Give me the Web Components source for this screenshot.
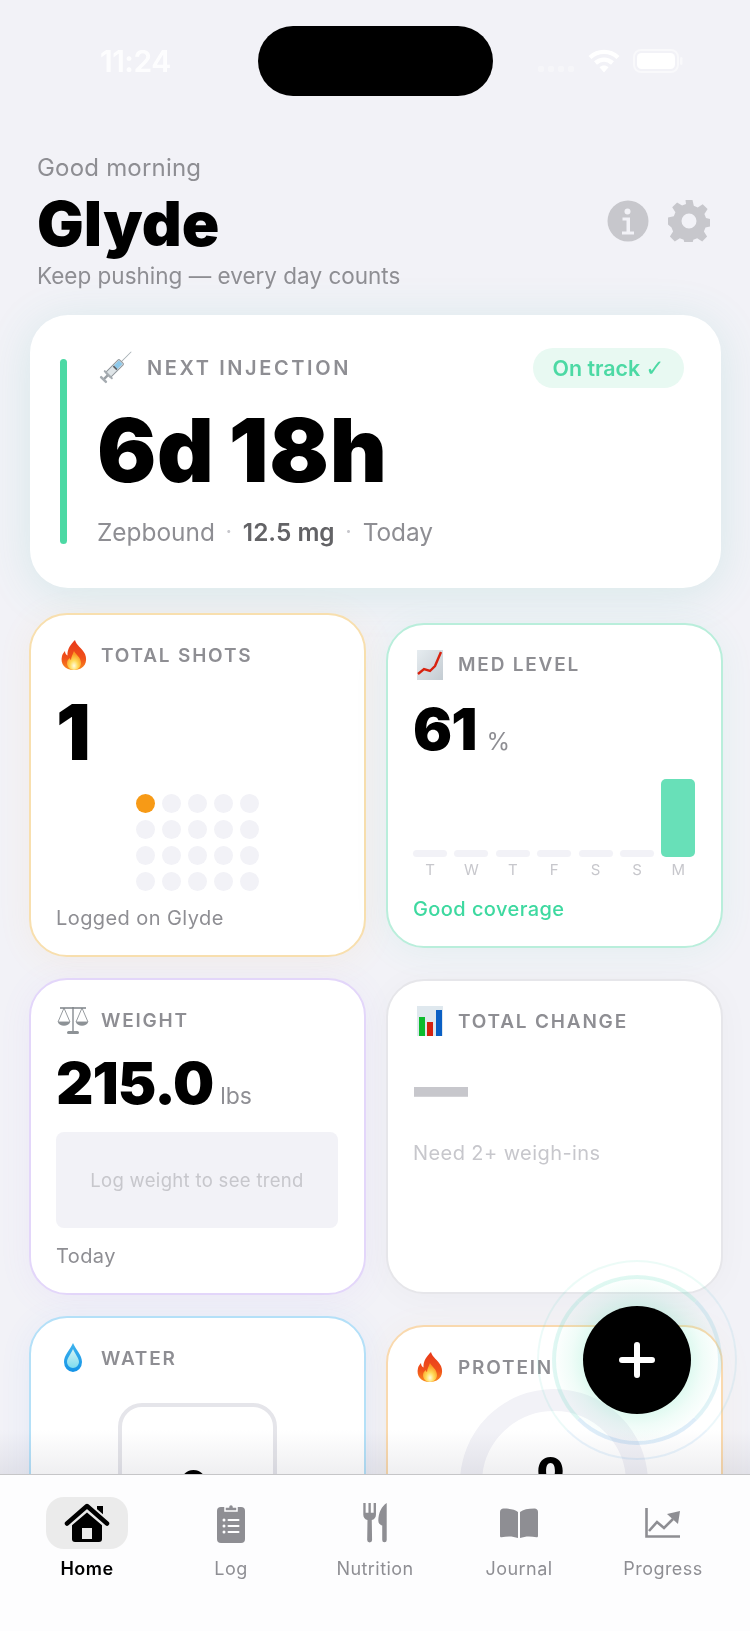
<!DOCTYPE html>
<html>
<head>
<meta charset="utf-8">
<style>
  html, body { margin: 0; background: #f2f2f7; font-family: Inter, "Liberation Sans", sans-serif; }
  svg { display: block; }
</style>
</head>
<body>

<svg width="0" height="0" style="position:absolute">
  <defs>
    <linearGradient id="flame" x1="0" y1="0" x2="0" y2="1">
      <stop offset="0" stop-color="#e8391a"/><stop offset=".6" stop-color="#f0501a"/><stop offset="1" stop-color="#f98a1f"/>
    </linearGradient>
    <radialGradient id="flameCore" cx=".5" cy=".78" r=".62">
      <stop offset="0" stop-color="#fffbe0"/><stop offset=".45" stop-color="#ffdc5a"/><stop offset="1" stop-color="#fb9a24"/>
    </radialGradient>
    <linearGradient id="drop" x1="0" y1="0" x2="0" y2="1">
      <stop offset="0" stop-color="#3fb4ee"/><stop offset="1" stop-color="#1493e6"/>
    </linearGradient>
    <linearGradient id="dropCore" x1="0" y1="0" x2="0" y2="1">
      <stop offset="0" stop-color="#d5f3f5"/><stop offset="1" stop-color="#7fdcee"/>
    </linearGradient>
    <linearGradient id="paper" x1="0" y1="0" x2="1" y2="1">
      <stop offset="0" stop-color="#e6ecf0"/><stop offset="1" stop-color="#c4ccd2"/>
    </linearGradient>
    <g id="fire">
      <path d="M15 0c1 5 7 8 10 14 3 7 0 16-11 16C5 30 0 24 2 16c.5-2 2-4 3-5 0 2 1 4 2.500 4.500C7 9 11 4 15 0z" fill="url(#flame)"/>
      <path d="M14 11c1 3 7 6 7 12 0 4-3 7-7 7s-7-3-7-7c0-3 2-4 3-5 0 1 .5 2 1 2 0-3 2-6 3-9z" fill="url(#flameCore)"/>
    </g>
  </defs>
</svg>

<script>
/* small helper so every component is declared the same way */
const define = (name, css, html) => {
  const template = document.createElement('template')
  template.innerHTML = `<style>${css}</style>${html}`
  customElements.define(name, class extends HTMLElement {
    constructor () {
      super()
      this.attachShadow({ mode: 'open' }).appendChild(template.content.cloneNode(true))
    }
  })
}

define('status-bar', `
  :host { display: flex; height: 122px; box-sizing: border-box; padding: 26px 0 0 100px; align-items: flex-start; color: #fff; }
  .time { font-size: 30px; font-weight: 600; line-height: 24px; margin-top: 23px; width: 158px; letter-spacing: -.5px; opacity: .92; }
  .island { width: 235px; height: 70px; background: #000; border-radius: 35px; }
  .icons { margin-left: 45px; display: flex; align-items: flex-start; padding-top: 23px; }
`, `
  <span class="time">11:24</span>
  <div class="island"></div>
  <div class="icons"><slot></slot></div>
`)

define('page-header', `
  :host { display: flex; justify-content: space-between; align-items: flex-start; padding: 30px 40px 0 37px; height: 193px; box-sizing: border-box; }
  .hi { font-size: 24px; line-height: 30px; color: #8e8e93; margin-top: 1px; letter-spacing: .2px; }
  .name { font-size: 62px; font-weight: 900; line-height: 68px; color: #000; letter-spacing: .1px; margin-top: 7px; }
  .sub { font-size: 22.5px; line-height: 28px; color: #8e8e93; margin-top: 4px; }
  .actions { display: flex; gap: 19px; margin-top: 48px; }
`, `
  <div>
    <div class="hi"><slot name="hi"></slot></div>
    <div class="name"><slot name="name"></slot></div>
    <div class="sub"><slot name="sub"></slot></div>
  </div>
  <div class="actions"><slot name="actions"></slot></div>
`)

define('hero-card', `
  :host { display: block; width: 691px; height: 273px; margin: 0 0 25px 30px; box-sizing: border-box; background: #fff; border-radius: 38px;
    box-shadow: 0 6px 46px rgba(60,180,160,.15); padding: 44px 37px 0 30px; }
  .wrap { display: flex; gap: 31px; height: 185px; }
  .rail { width: 7px; background: #4cd9a4; border-radius: 4px; }
  .main { flex: 1; min-width: 0; }
  .top { display: flex; justify-content: space-between; align-items: center; height: 32px; margin-top: -7px; }
  .big { font-size: 88px; font-weight: 900; line-height: 88px; color: #000; letter-spacing: .7px; word-spacing: -4px; margin-top: 22px; margin-left: -1px; }
  .foot { margin-top: 23px; margin-left: -1px; }
`, `
  <div class="wrap">
    <div class="rail"></div>
    <div class="main">
      <div class="top"><slot name="label"></slot><slot name="pill"></slot></div>
      <div class="big"><slot name="big"></slot></div>
      <div class="foot"><slot name="foot"></slot></div>
    </div>
  </div>
`)

define('card-label', `
  :host { display: flex; align-items: center; height: 30px; font-weight: 600; color: #8e8e93; font-size: 19px; letter-spacing: 1.8px; white-space: nowrap; }
  .ic { width: var(--ic, 45px); flex: none; display: flex; justify-content: flex-start; }
`, `<span class="ic"><slot name="icon"></slot></span><slot></slot>`)

define('stat-card', `
  :host { display: block; box-sizing: border-box; width: 337px; background: #fff; border: 2px solid var(--edge, #e6e6ea); border-radius: 38px;
    padding: 25px 26px 25px 25px; box-shadow: 0 4px 34px var(--glow, rgba(0,0,0,.03)); }
`, `<slot></slot>`)

define('big-value', `
  :host { display: block; font-size: var(--size, 58px); line-height: var(--size, 58px); font-weight: 900; color: #000; letter-spacing: -1px; white-space: nowrap; }
  .unit { font-size: var(--unit, 24px); line-height: 0; font-weight: 400; color: #8e8e93; letter-spacing: 0; margin-left: var(--unit-gap, 8px); }
`, `<slot></slot><span class="unit"><slot name="unit"></slot></span>`)

define('card-note', `
  :host { display: block; font-size: 20px; line-height: 24px; color: #8e8e93; white-space: nowrap; letter-spacing: .42px; }
`, `<slot></slot>`)

define('dot-grid', `
  :host { display: grid; grid-template-columns: repeat(5, 19px); gap: 7px; justify-content: center; }
  span { width: 19px; height: 19px; border-radius: 50%; background: #f2f2f7; }
  span.on { background: #f79a16; }
`, `<span class="on"></span>${'<span></span>'.repeat(19)}`)

define('day-bars', `
  :host { display: grid; grid-template-columns: repeat(7, 34px); column-gap: 7.4px; grid-template-rows: 78px 18px; row-gap: 4px; align-items: end; }
  i { display: block; height: 7px; background: #f2f2f7; border-radius: 4px; }
  i.full { height: 78px; background: #68e0b8; border-radius: 5px; }
  b { font-size: 15px; line-height: 18px; font-weight: 400; color: #c7c7cc; text-align: center; }
`, `
  <i></i><i></i><i></i><i></i><i></i><i></i><i class="full"></i>
  <b>T</b><b>W</b><b>T</b><b>F</b><b>S</b><b>S</b><b>M</b>
`)

define('trend-empty', `
  :host { display: flex; align-items: center; justify-content: center; height: 96px; width: 282px; background: #f2f2f7; border-radius: 8px; font-size: 18.5px; letter-spacing: .32px; color: #c7c7cc; }
`, `<slot></slot>`)

define('water-glass', `
  :host { display: flex; align-items: center; justify-content: center; box-sizing: border-box; width: 159px; height: 176px; margin: 30px auto 0; border: 4px solid #e5e5ea; border-radius: 24px; padding-bottom: 14px; }
`, `<slot></slot>`)

define('protein-ring', `
  :host { display: flex; align-items: center; justify-content: center; box-sizing: border-box; width: 188px; height: 188px; margin: 7px auto 0; border: 22px solid #f2f2f7; border-radius: 50%; padding-bottom: 24px; }
`, `<slot></slot>`)

define('add-button', `
  :host { position: absolute; left: 537px; top: 1260px; width: 200px; height: 200px; border-radius: 50%; display: flex; align-items: center; justify-content: center;
    background: radial-gradient(circle closest-side, rgba(60,220,165,.16) 54%, rgba(60,220,165,.08) 66%, rgba(60,220,165,0) 85%); }
  .r1, .r2 { position: absolute; border-radius: 50%; box-sizing: border-box; }
  .r1 { inset: 15px; border: 4px solid; border-color: rgba(100,220,190,.2) rgba(110,195,215,.2) rgba(110,175,225,.22) rgba(100,215,195,.2); }
  .r2 { inset: 0; border: 2px solid; border-color: rgba(100,220,190,.12) rgba(110,195,215,.13) rgba(110,175,225,.15) rgba(100,215,195,.12); }
  .btn { width: 108px; height: 108px; background: #000; border-radius: 50%; display: flex; align-items: center; justify-content: center; position: relative; }
`, `<span class="r2"></span><span class="r1"></span><div class="btn"><slot></slot></div>`)

define('tab-bar', `
  :host { display: grid; grid-template-columns: repeat(5, 144px); box-sizing: border-box; height: 157px; padding: 22px 15px 0; background: #fdfdfe; border-top: 1px solid #c6c6c8; position: relative; }
`, `<slot></slot>`)

define('tab-item', `
  :host { display: flex; flex-direction: column; align-items: center; color: #8e8e93; font-size: 18px; line-height: 22px; letter-spacing: .45px; }
  :host([active]) { color: #000; font-weight: 600; }
  .ic { width: 82px; height: 52px; border-radius: 18px; display: flex; align-items: center; justify-content: center; margin-bottom: 9px; }
  :host([active]) .ic { background: #ebebeb; }
`, `<span class="ic"><slot name="icon"></slot></span><slot></slot>`)

define('on-track', `
  :host { display: flex; align-items: center; justify-content: center; gap: 5px; height: 40px; width: 151px; box-sizing: border-box; border-radius: 20px; background: #e8f9f2; color: #4cd9a4; font-size: 21.4px; font-weight: 600; white-space: nowrap; }
  span { font-family: "DejaVu Sans", sans-serif; font-weight: 400; font-size: 23px; line-height: 24px; }
`, `On track <span>✓</span>`)

define('hero-meta', `
  :host { display: flex; align-items: center; font-size: 24.4px; line-height: 30px; color: #8e8e93; white-space: nowrap; }
  b { font-weight: 600; color: #636366; }
  i { font-style: normal; font-weight: 700; margin: 0 11px; color: #c7c7cc; font-size: 18px; }
`, `Zepbound<i>·</i><b>12.5 mg</b><i>·</i>Today`)

define('glyde-app', `
  :host { display: block; position: relative; width: 750px; height: 1631px; overflow: hidden; background: #f2f2f7; }
  .scroll { height: 1474px; overflow: hidden; position: relative; }
  .cards { display: grid; grid-template-columns: 337px 337px; gap: 21px 20px; align-items: center; margin-left: 29px; }
  .fade { position: absolute; left: 0; right: 0; top: 1430px; height: 44px; background: linear-gradient(#fff, #efeff1); mix-blend-mode: multiply; pointer-events: none; }
`, `
  <div class="scroll">
    <slot name="top"></slot>
    <div class="cards"><slot name="cards"></slot></div>
    <div class="fade"></div>
  </div>
  <slot name="tabs"></slot>
  <slot name="fab"></slot>
`)
</script>

<glyde-app>
  <status-bar slot="top">
    <svg width="36" height="24" viewBox="0 0 36 24"><g fill="#fff" opacity=".35"><rect x="0" y="17" width="6" height="6" rx="2"/><rect x="10" y="17" width="6" height="6" rx="2"/><rect x="20" y="17" width="6" height="6" rx="2"/><rect x="30" y="17" width="6" height="6" rx="2"/></g></svg>
    <svg width="32" height="24" viewBox="0 0 32 24" style="margin-left:14px"><path d="M2 8.500C10 1 22 1 30 8.500" fill="none" stroke="#fff" stroke-width="4.400"/><path d="M7.500 14C12.500 9.500 19.500 9.500 24.500 14" fill="none" stroke="#fff" stroke-width="4.400"/><path d="M11.500 18.200c2.600-2.400 6.400-2.400 9 0L16 23.500z" fill="#fff"/></svg>
    <svg width="50" height="24" viewBox="0 0 50 24" style="margin-left:13px"><rect x="1" y="1" width="44" height="22" rx="7" fill="none" stroke="#fff" stroke-opacity=".5" stroke-width="2"/><rect x="4" y="4" width="38" height="16" rx="4.500" fill="#fff"/><rect x="47" y="8" width="2.500" height="8" rx="1.200" fill="#fff" opacity=".5"/></svg>
  </status-bar>

  <page-header slot="top">
    <span slot="hi">Good morning</span>
    <span slot="name">Glyde</span>
    <span slot="sub">Keep pushing — every day counts</span>
    <svg slot="actions" width="42" height="42" viewBox="0 0 42 42"><circle cx="21" cy="21" r="20.500" fill="#c7c7cc"/><circle cx="20.500" cy="11.500" r="3" fill="#f2f2f7"/><path d="M15.500 17.500h7.500v14h4v3H15v-3h4.500v-11h-4z" fill="#f2f2f7"/></svg>
    <svg slot="actions" width="42" height="42" viewBox="0 0 42 42"><path fill="#c7c7cc" fill-rule="evenodd" d="M17.500 0h7l1.300 5.800 3.900 1.600 5-3.200 4.900 4.900-3.200 5 1.600 3.900 5.300 1.300v7l-5.800 1.300-1.600 3.900 3.200 5-4.900 4.900-5-3.200-3.900 1.600-1.300 5.800h-7l-1.300-5.800-3.900-1.600-5 3.200-4.900-4.900 3.200-5-1.600-3.900L0 24.500v-7l5.800-1.300 1.600-3.900-3.200-5 4.900-4.900 5 3.200 3.900-1.600zM21 13.500a7.500 7.500 0 1 0 0 15 7.500 7.500 0 0 0 0-15z"/></svg>
  </page-header>

  <hero-card slot="top">
    <card-label slot="label" style="font-size:20px;letter-spacing:2.6px;--ic:49px">
      <svg slot="icon" width="34" height="34" viewBox="0 0 34 34"><g transform="rotate(45 17 17)"><rect x="16.600" y="-6" width=".8" height="15" fill="#a4adb3"/><rect x="13.500" y="8" width="7" height="19" rx="1" fill="#dfe5e8" stroke="#90969b" stroke-width="1"/><rect x="14.500" y="9" width="5" height="7" fill="#8cc8ea"/><rect x="14.500" y="16" width="5" height="1.600" fill="#555c62"/><rect x="15.800" y="27" width="2.400" height="6" fill="#9aa0a5"/><rect x="12.500" y="32" width="9" height="2.500" rx="1" fill="#a6acb1"/><rect x="11" y="25.500" width="12" height="2" rx="1" fill="#a6acb1"/></g></svg>
      NEXT INJECTION
    </card-label>
    <on-track slot="pill"></on-track>
    <span slot="big">6d 18h</span>
    <hero-meta slot="foot"></hero-meta>
  </hero-card>

  <stat-card slot="cards" style="--edge:#f8dfae;--glow:rgba(245,170,60,.08)">
    <card-label><svg slot="icon" width="28" height="30" viewBox="0 0 28 30" style="margin-left:4px"><use href="#fire"/></svg>TOTAL SHOTS</card-label>
    <big-value style="--size:77px;margin-top:24px">1</big-value>
    <dot-grid style="margin-top:23px"></dot-grid>
    <card-note style="margin-top:15px">Logged on Glyde</card-note>
  </stat-card>

  <stat-card slot="cards" style="--edge:#b9eedb;--glow:rgba(60,210,160,.08)">
    <card-label><svg slot="icon" width="28" height="30" viewBox="0 0 28 30" style="margin-left:3px"><rect x="1" y="0" width="26" height="30" fill="url(#paper)"/><path d="M2 24l6-5 6 2 5-5 6-14" fill="none" stroke="#d8220f" stroke-width="2.400"/></svg>MED LEVEL</card-label>
    <big-value style="margin-top:20px;--unit-gap:10px">61<span slot="unit">%</span></big-value>
    <day-bars style="margin-top:21px"></day-bars>
    <card-note style="margin-top:18px;color:#3ed9a0;font-weight:500">Good coverage</card-note>
  </stat-card>

  <stat-card slot="cards" style="--edge:#e3d6fa;--glow:rgba(160,120,240,.07)">
    <card-label><svg slot="icon" width="32" height="30" viewBox="0 0 32 30" style="margin-left:1px"><g fill="none" stroke="#7d8388" stroke-width="1.300"><path d="M16 2v24M3 3h26"/><path d="M7 3L1 17h12zM25 3l-6 14h12z" stroke-width=".8"/></g><path d="M1 17c1 5 11 5 12 0zM19 17c1 5 11 5 12 0z" fill="#8d9296"/><rect x="10" y="26" width="12" height="3" rx="1.500" fill="#8d9296"/></svg>WEIGHT</card-label>
    <big-value style="margin-top:19px;--unit:23px;--unit-gap:7px">215.0<span slot="unit">lbs</span></big-value>
    <trend-empty style="margin-top:20px">Log weight to see trend</trend-empty>
    <card-note style="margin-top:16px">Today</card-note>
  </stat-card>

  <stat-card slot="cards" style="--edge:#e6e6ea;min-height:315px">
    <card-label><svg slot="icon" width="28" height="30" viewBox="0 0 28 30" style="margin-left:3px"><rect x="1" y="0" width="26" height="30" fill="#dfe8ee"/><rect x="3" y="11" width="6" height="19" fill="#0dbb2e"/><rect x="11" y="16" width="6" height="14" fill="#d5210f"/><rect x="20" y="4" width="6" height="26" fill="#0a5fc4"/></svg>TOTAL CHANGE</card-label>
    <big-value style="--size:52px;margin:27px 0 0 2px;color:#c7c7cc;-webkit-text-stroke:2px #c7c7cc;letter-spacing:0">—</big-value>
    <card-note style="margin-top:26px;color:#c7c7cc">Need 2+ weigh-ins</card-note>
  </stat-card>

  <stat-card slot="cards" style="--edge:#b4e0f8;--glow:rgba(60,120,240,.07);height:320px">
    <card-label><svg slot="icon" width="28" height="30" viewBox="0 0 28 30" style="margin-left:3px"><path d="M14 0c3 7 9 12 9 19a9 10 0 0 1-18 0C5 12 11 7 14 0z" fill="url(#drop)"/><path d="M14 6c2 5 6 9 6 13a6 6 0 0 1-12 0c0-4 4-8 6-13z" fill="url(#dropCore)"/></svg>WATER</card-label>
    <water-glass><big-value style="--size:38px">0</big-value></water-glass>
  </stat-card>

  <stat-card slot="cards" style="--edge:#f9d9ae;--glow:rgba(245,170,60,.06);height:302px">
    <card-label><svg slot="icon" width="28" height="30" viewBox="0 0 28 30" style="margin-left:3px"><use href="#fire"/></svg>PROTEIN</card-label>
    <protein-ring><big-value style="--size:38px">0</big-value></protein-ring>
  </stat-card>

  <add-button slot="fab">
    <svg width="36" height="36" viewBox="0 0 36 36"><path d="M18 3v30M3 18h30" stroke="#fff" stroke-width="6" stroke-linecap="round"/></svg>
  </add-button>

  <tab-bar slot="tabs">
    <tab-item active>
      <svg slot="icon" width="46" height="40" viewBox="0 0 46 40"><rect x="33" y="3" width="6" height="13" fill="#000"/><path d="M8 20L23 8l15 12v16a3 3 0 0 1-3 3H11a3 3 0 0 1-3-3z" fill="#000"/><path d="M2.500 21L23 3.500 43.500 21" fill="none" stroke="#ebebeb" stroke-width="9"/><path d="M3 20.500L23 3l20 17.500" fill="none" stroke="#000" stroke-width="4.500" stroke-linecap="round" stroke-linejoin="round"/><rect x="18" y="25" width="10" height="11" fill="#ebebeb"/></svg>
      Home
    </tab-item>
    <tab-item>
      <svg slot="icon" width="28" height="40" viewBox="0 0 28 40"><path d="M4 4h20a4 4 0 0 1 4 4v28a4 4 0 0 1-4 4H4a4 4 0 0 1-4-4V8a4 4 0 0 1 4-4z" fill="#8e8e93"/><path d="M8 8V4h3.500a2.500 2.500 0 0 1 5 0H20v4z" fill="#8e8e93" stroke="#fdfdfe" stroke-width="1.500"/><g fill="#fdfdfe"><circle cx="7" cy="17" r="1.500"/><circle cx="7" cy="23" r="1.500"/><circle cx="7" cy="29" r="1.500"/><rect x="10.500" y="16" width="12" height="2" rx="1"/><rect x="10.500" y="22" width="12" height="2" rx="1"/><rect x="10.500" y="28" width="12" height="2" rx="1"/></g></svg>
      Log
    </tab-item>
    <tab-item>
      <svg slot="icon" width="24" height="40" viewBox="0 0 24 41" fill="#8e8e93"><path d="M0 0h2.400v10h2.900V0h2.400v10h2.900V0H13v12c0 3-2 5-4.300 5.500L9 38a2.500 2.500 0 0 1-5 0l.3-20.500C2 17 0 15 0 12z"/><path d="M24 0v38a2.300 2.300 0 0 1-4.600 0V23c-2.500-.5-4-2-4-5C15.400 10 19 3 24 0z"/></svg>
      Nutrition
    </tab-item>
    <tab-item>
      <svg slot="icon" width="38" height="30" viewBox="0 0 38 30" fill="#8e8e93"><path d="M18 4C15 1.500 10 .5 3.500.5 1.500.5 0 2 0 4v24c0 1 .8 1.500 1.500 1.300C7 28 13 28 18 30z"/><path d="M20 4c3-2.500 8-3.500 14.500-3.500 2 0 3.500 1.500 3.500 3.500v24c0 1-.8 1.500-1.500 1.300C31 28 25 28 20 30z"/></svg>
      Journal
    </tab-item>
    <tab-item>
      <svg slot="icon" width="36" height="30" viewBox="0 0 36 30"><path d="M1.500 0v28.500H35" fill="none" stroke="#8e8e93" stroke-width="2.600"/><path d="M4 23l8-9 7 6 9-9" fill="none" stroke="#8e8e93" stroke-width="2.600"/><path d="M22 6l13-3-2 13z" fill="#8e8e93"/></svg>
      Progress
    </tab-item>
  </tab-bar>
</glyde-app>

</body>
</html>
